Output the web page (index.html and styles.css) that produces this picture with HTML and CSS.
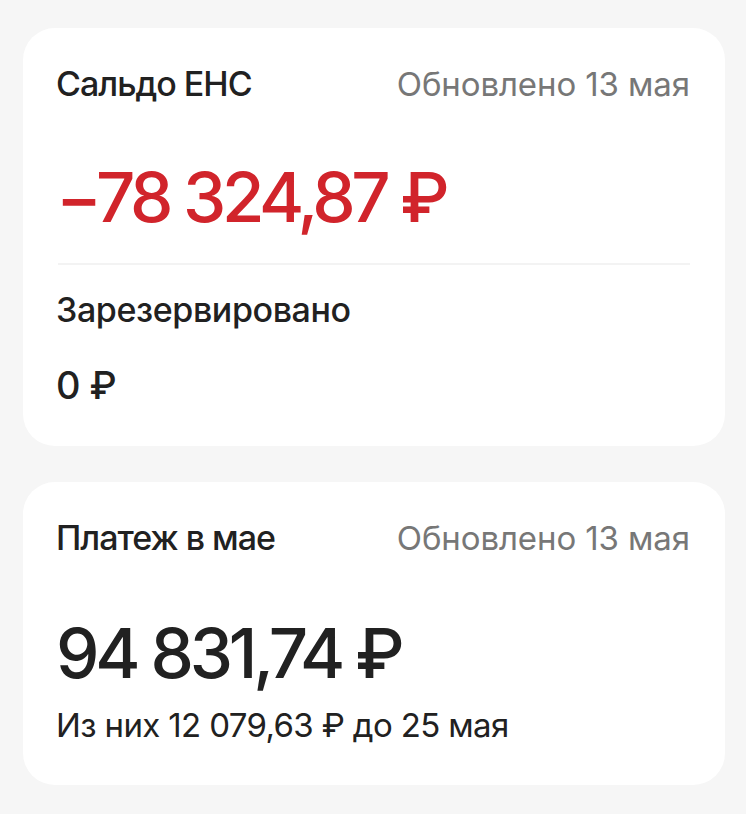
FILE: index.html
```html
<!DOCTYPE html>
<html lang="ru">
<head>
<meta charset="utf-8">
<title>Сальдо ЕНС</title>
<link rel="stylesheet" href="styles.css">
</head>
<body>
<main class="page">
  <section class="card card-balance">
    <div class="card-head">
      <h2 class="card-title">Сальдо ЕНС</h2>
      <span class="card-date">Обновлено 13 мая</span>
    </div>
    <div class="amount amount-negative">−78 324,87 ₽</div>
    <hr class="divider">
    <div class="sub-title">Зарезервировано</div>
    <div class="sub-amount">0 ₽</div>
  </section>
  <section class="card card-payment">
    <div class="card-head">
      <h2 class="card-title">Платеж в мае</h2>
      <span class="card-date">Обновлено 13 мая</span>
    </div>
    <div class="amount amount-payment">94 831,74 ₽</div>
    <div class="note">Из них 12 079,63 ₽ до 25 мая</div>
  </section>
</main>
</body>
</html>
```
FILE: styles.css
```css
* { box-sizing: border-box; }
html, body { margin: 0; padding: 0; }
body {
  background: #f6f6f6;
  font-family: Inter, "Noto Sans", sans-serif;
  color: #212121;
  width: 746px;
  height: 814px;
  overflow: hidden;
}
.page {
  display: flex;
  flex-direction: column;
  gap: 36px;
  padding: 28px 21px 0 23px;
}
.card {
  background: #ffffff;
  border-radius: 32px;
  padding: 36px 35px 39px 33px;
}
.card-payment { padding-bottom: 40px; }
.card-head {
  display: flex;
  justify-content: space-between;
  align-items: baseline;
}
.card-title {
  margin: 0;
  font-size: 34px;
  line-height: 40px;
  font-weight: 500;
  letter-spacing: -1px;
}
.card-date {
  font-size: 33px;
  line-height: 40px;
  color: #777777;
  letter-spacing: -0.1px;
}
.amount {
  font-size: 69px;
  line-height: 72px;
  font-weight: 500;
}
.amount-negative {
  color: #d1242b;
  margin-top: 57px;
  letter-spacing: -4.4px;
}
.amount-payment {
  margin-top: 59px;
  letter-spacing: -4.2px;
}
.divider {
  border: 0;
  height: 2px;
  background: #f3f3f3;
  margin: 30px 0 0 2px;
}
.sub-title {
  margin-top: 25px;
  font-size: 34px;
  line-height: 40px;
  font-weight: 500;
  letter-spacing: -0.4px;
}
.sub-amount {
  margin-top: 33px;
  font-size: 38px;
  line-height: 44px;
  font-weight: 500;
  letter-spacing: -0.6px;
}
.note {
  margin-top: 16px;
  font-size: 33px;
  line-height: 40px;
  letter-spacing: -0.64px;
}
```
